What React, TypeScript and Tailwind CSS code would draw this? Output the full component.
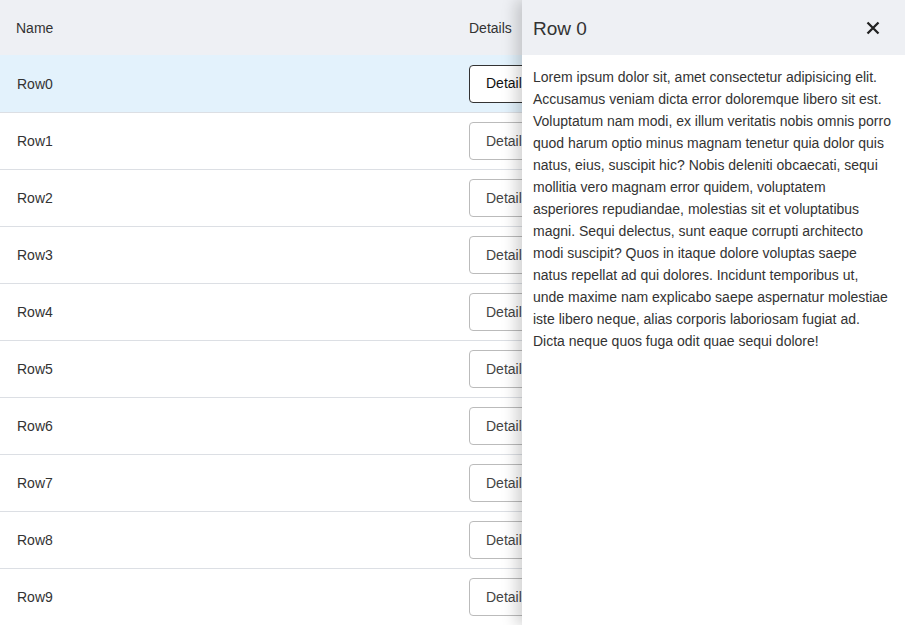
import { useState } from 'react'

const rows = Array.from({ length: 10 }, (_, i) => `Row${i}`)

const lorem =
  'Lorem ipsum dolor sit, amet consectetur adipisicing elit. Accusamus veniam dicta error doloremque libero sit est. Voluptatum nam modi, ex illum veritatis nobis omnis porro quod harum optio minus magnam tenetur quia dolor quis natus, eius, suscipit hic? Nobis deleniti obcaecati, sequi mollitia vero magnam error quidem, voluptatem asperiores repudiandae, molestias sit et voluptatibus magni. Sequi delectus, sunt eaque corrupti architecto modi suscipit? Quos in itaque dolore voluptas saepe natus repellat ad qui dolores. Incidunt temporibus ut, unde maxime nam explicabo saepe aspernatur molestiae iste libero neque, alias corporis laboriosam fugiat ad. Dicta neque quos fuga odit quae sequi dolore!'

export default function App() {
  const [selected, setSelected] = useState<number | null>(0)

  return (
    <div className="relative h-[625px] w-[905px] overflow-hidden bg-white font-['Liberation_Sans',Arial,sans-serif] text-[14px] text-[#333]">
      <table className="w-full border-collapse">
        <thead>
          <tr className="h-[55px] bg-[#eef0f4]">
            <th className="pl-4 pt-[2px] text-left font-normal">Name</th>
            <th className="w-[436px] pl-0 pt-[2px] text-left font-normal">Details</th>
          </tr>
        </thead>
        <tbody>
          {rows.map((r, i) => (
            <tr
              key={r}
              className={`h-[57px] border-b border-[#dcdfe4] ${selected === i ? 'bg-[#e3f2fc]' : ''}`}
            >
              <td className="pl-[17px] pt-[2px]">{r}</td>
              <td className="pt-[1px]">
                <button
                  onClick={() => setSelected(i)}
                  className={`h-[38px] rounded-[4px] border bg-white px-4 text-[14px] ${
                    selected === i ? 'border-[#333] bg-[#f5f5f5] text-[#111]' : 'border-[#bbb] text-[#444]'
                  }`}
                >
                  Details
                </button>
              </td>
            </tr>
          ))}
        </tbody>
      </table>

      {selected !== null && (
        <div className="absolute right-0 top-0 flex h-full w-[383px] flex-col bg-white shadow-[-6px_0_14px_rgba(0,0,0,0.18)]">
          <div className="flex h-[55px] shrink-0 items-center justify-between bg-[#eef0f4] pl-[11px] pr-[25px] pt-[1px]">
            <h2 className="pt-[2px] text-[19px] text-[#333]">Row {selected}</h2>
            <button onClick={() => setSelected(null)} className="text-[#222]">
              <svg width="14" height="14" viewBox="0 0 14 14">
                <path d="M1.5 1.5 L12.5 12.5 M12.5 1.5 L1.5 12.5" stroke="currentColor" strokeWidth="2.3" />
              </svg>
            </button>
          </div>
          <p className="pl-[11px] pr-[12px] pt-[11px] leading-[22px] text-[#333]">{lorem}</p>
        </div>
      )}
    </div>
  )
}
